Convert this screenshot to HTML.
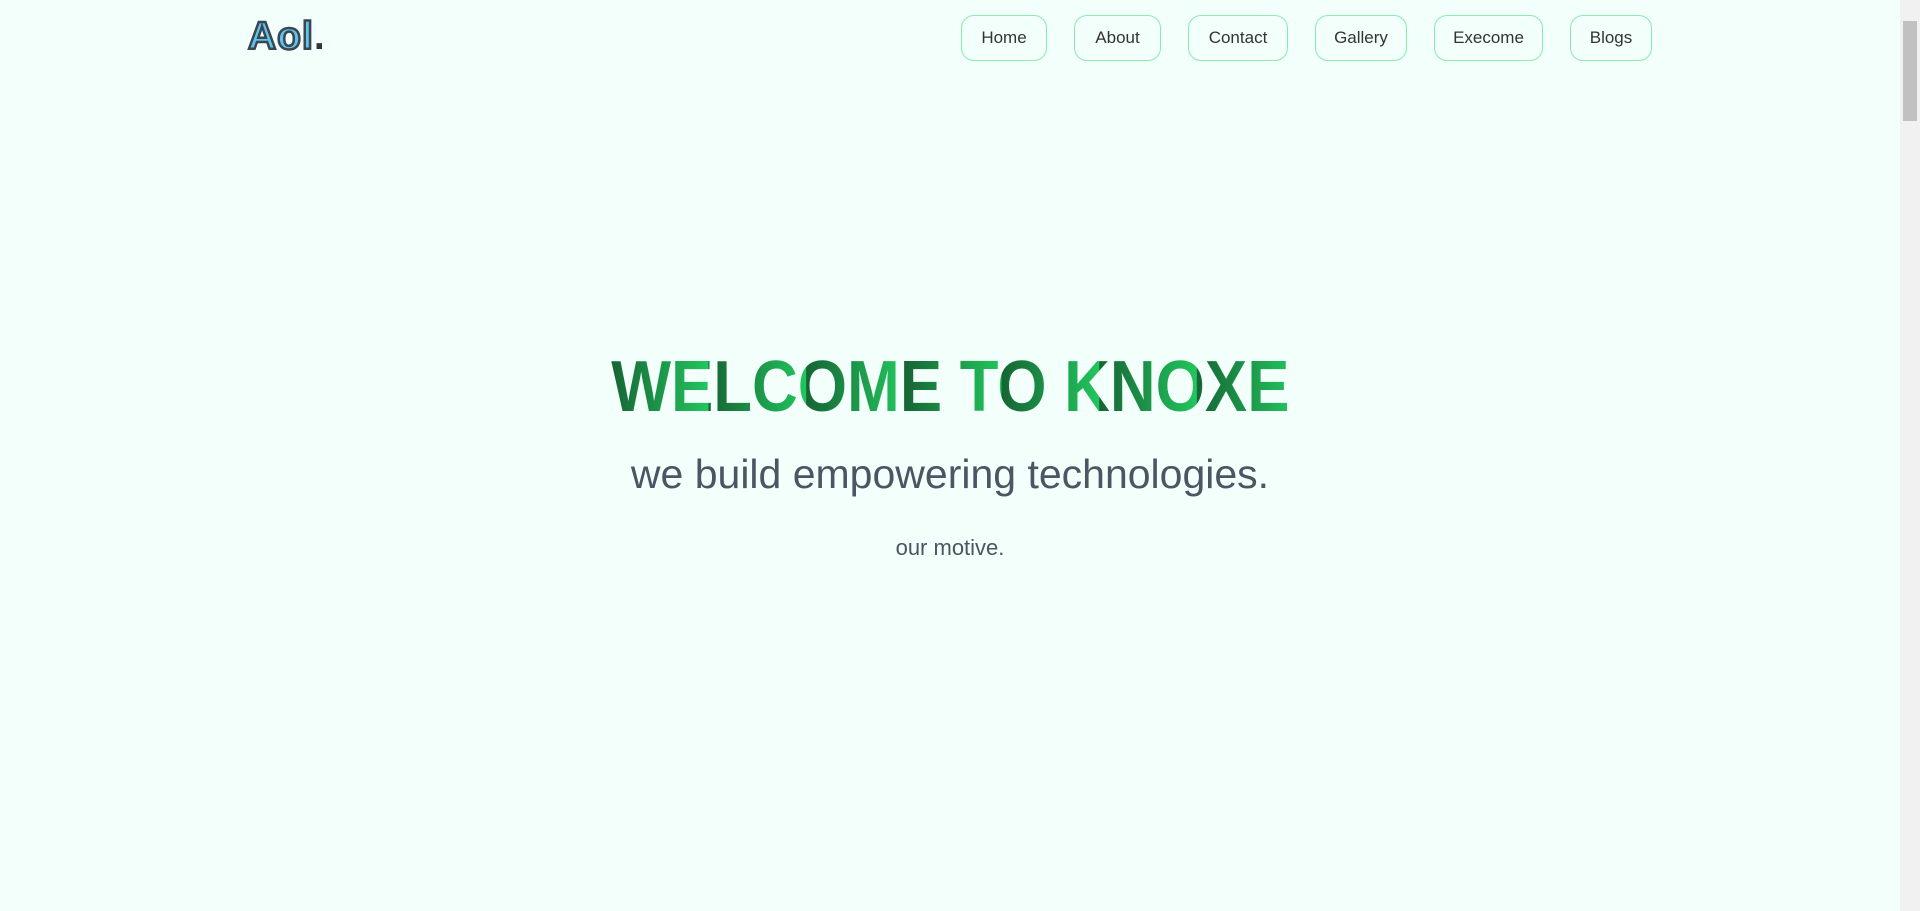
<!DOCTYPE html>
<html><head><meta charset="utf-8"><style>
html,body{margin:0;padding:0}
body{width:1920px;height:911px;background:#f3fffa;font-family:"Liberation Sans",sans-serif;position:relative;overflow:hidden}
.logo{position:absolute;left:248px;top:15px;font-size:39px;font-weight:bold;color:#5ec3ee;-webkit-text-stroke:2.5px #3b4650;letter-spacing:1px}
.logo span{color:#333;-webkit-text-stroke:0}
.nav a{position:absolute;top:15px;height:46px;border:1px solid #86efac;border-radius:13px;box-sizing:border-box;display:flex;align-items:center;justify-content:center;font-size:17px;color:#333;text-decoration:none}
.h1{position:absolute;left:0;width:1900px;top:347px;text-align:center;font-size:72px;font-weight:bold;line-height:80px}
.h1 span{display:inline-block;background:repeating-linear-gradient(90deg,#166534 0,#22c55e 110px,#166534 111px);-webkit-background-clip:text;background-clip:text;color:transparent;transform:scaleX(0.88)}
.sub{position:absolute;left:0;width:1900px;top:449px;text-align:center;font-size:41px;color:#4b5563;line-height:50px}
.m{position:absolute;left:0;width:1900px;top:535px;text-align:center;font-size:22px;color:#4b5563}
.sb{position:absolute;right:0;top:0;width:20px;height:911px;background:#f1f1f1}
.sb div{position:absolute;left:3px;top:21px;width:14px;height:100px;background:#c1c1c1}
</style></head><body>
<div class="logo">Aol<span>.</span></div>
<div class="nav">
<a style="left:961px;width:86px">Home</a>
<a style="left:1074px;width:87px">About</a>
<a style="left:1188px;width:100px">Contact</a>
<a style="left:1315px;width:92px">Gallery</a>
<a style="left:1434px;width:109px">Execome</a>
<a style="left:1570px;width:82px">Blogs</a>
</div>
<div class="h1"><span>WELCOME TO KNOXE</span></div>
<div class="sub">we build empowering technologies.</div>
<div class="m">our motive.</div>
<div class="sb"><div></div></div>
</body></html>
